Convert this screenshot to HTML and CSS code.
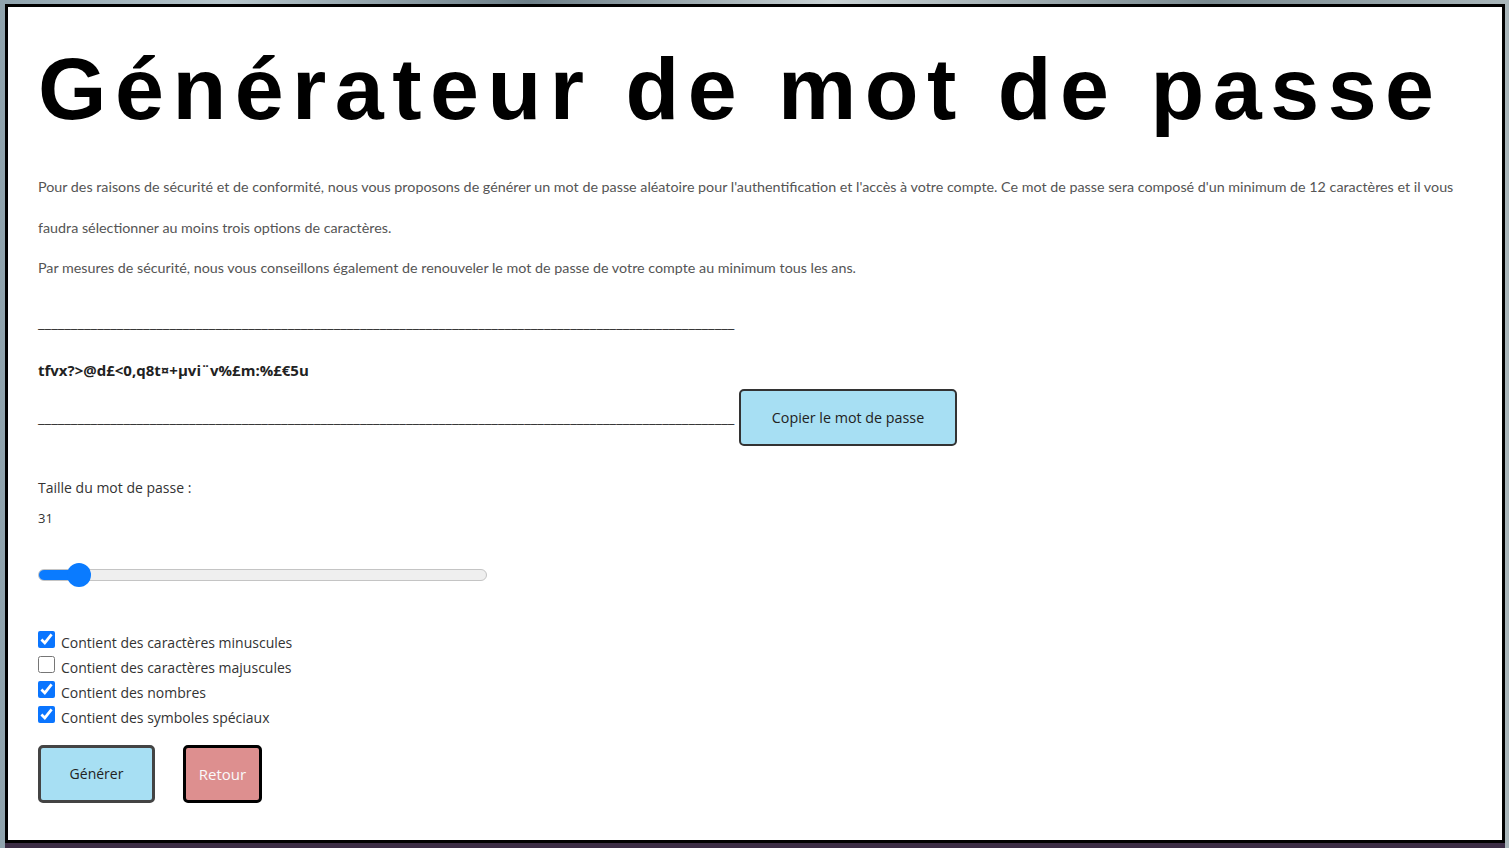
FILE: index.html
```html
<!DOCTYPE html>
<html lang="fr">
<head>
<meta charset="utf-8">
<title>Générateur de mot de passe</title>
<link rel="stylesheet" href="styles.css">
</head>
<body>
<main class="frame">
  <h1 class="title">Générateur de mot de passe</h1>
  <section class="intro">
    <p>Pour des raisons de sécurité et de conformité, nous vous proposons de générer un mot de passe aléatoire pour l'authentification et l'accès à votre compte. Ce mot de passe sera composé d'un minimum de 12 caractères et il vous faudra sélectionner au moins trois options de caractères.</p>
    <p>Par mesures de sécurité, nous vous conseillons également de renouveler le mot de passe de votre compte au minimum tous les ans.</p>
  </section>
  <section class="result">
    <div class="rule">__________________________________________________________________________________________________________</div>
    <div class="password">tfvx?&gt;@d£&lt;0,q8t¤+µvi¨v%£m:%£€5u</div>
    <div class="rule-row">
      <div class="rule">__________________________________________________________________________________________________________</div>
      <button class="btn btn-copy" type="button">Copier le mot de passe</button>
    </div>
  </section>
  <section class="settings">
    <label class="size-label" for="size">Taille du mot de passe :</label>
    <div class="size-value">31</div>
    <input class="slider" id="size" type="range" min="12" max="300" value="31">
    <div class="options">
      <label class="option"><input type="checkbox" checked> Contient des caractères minuscules</label>
      <label class="option"><input type="checkbox"> Contient des caractères majuscules</label>
      <label class="option"><input type="checkbox" checked> Contient des nombres</label>
      <label class="option"><input type="checkbox" checked> Contient des symboles spéciaux</label>
    </div>
    <div class="actions">
      <button class="btn btn-generate" type="button">Générer</button>
      <button class="btn btn-back" type="button">Retour</button>
    </div>
  </section>
</main>
</body>
</html>
```

FILE: styles.css
```css
html, body {
  margin: 0;
  height: 100%;
}
body {
  box-sizing: border-box;
  padding: 4px 4px 5px 5px;
  background: linear-gradient(90deg, #8fa3ad 0%, #b7c6cc 15%, #6d7f88 35%, #c9d2d4 55%, #7a8a90 80%, #a9b6ba 100%);
  background-color: #7f9099;
  overflow: hidden;
}
.frame {
  box-sizing: border-box;
  height: 839px;
  width: 1500px;
  background: #fff;
  border: 3px solid #000;
  padding: 27px 30px 0 30px;
  position: relative;
  box-shadow: 0 6px 0 0 #3b2c44;
}
.title {
  margin: 0;
  font-family: "Liberation Sans", Arial, sans-serif;
  font-weight: 700;
  font-size: 88px;
  line-height: 110px;
  letter-spacing: 8.5px;
  color: #000;
  white-space: nowrap;
}
.intro {
  margin-top: 23px;
  font-family: Lato, "Open Sans", sans-serif;
  font-size: 14.3px;
  line-height: 40.5px;
  color: #555;
}
.intro p {
  margin: 0;
}
.result {
  margin-top: 23px;
  font-family: "Open Sans", "Noto Sans", sans-serif;
  font-size: 15px;
  color: #333;
}
.rule {
  width: 697px;
  white-space: nowrap;
  line-height: 20px;
  color: #333;
  font-size: 15px;
}
.password {
  margin-top: 28px;
  font-weight: 700;
  font-size: 15px;
  line-height: 20px;
  color: #222;
}
.rule-row {
  display: flex;
  align-items: baseline;
  gap: 4px;
  margin-top: 9px;
}
.btn {
  font-family: "Open Sans", "Noto Sans", sans-serif;
  font-size: 14px;
  border-radius: 5px;
  cursor: pointer;
  padding: 0;
  box-sizing: border-box;
}
.btn-copy {
  width: 218px;
  height: 57px;
  background: #a7dff3;
  border: 2.5px solid #333;
  color: #222;
  font-size: 14.3px;
}
.settings {
  font-family: "Open Sans", "Noto Sans", sans-serif;
  color: #333;
  font-size: 14px;
}
.size-label {
  display: block;
  margin-top: 32px;
  line-height: 20px;
}
.size-value {
  margin-top: 10px;
  line-height: 20px;
  font-size: 13px;
}
.slider {
  display: block;
  -webkit-appearance: none;
  appearance: none;
  box-sizing: border-box;
  margin: 41px 0 0 0;
  width: 449px;
  height: 12px;
  border-radius: 6px;
  border: 1px solid #c4c4c4;
  background: linear-gradient(90deg, #0a7bff 0 9%, #efefef 9% 100%);
  outline: none;
}
.slider::-webkit-slider-thumb {
  -webkit-appearance: none;
  appearance: none;
  width: 24px;
  height: 24px;
  border-radius: 50%;
  background: #0a7bff;
  border: none;
}
.options {
  margin-top: 49px;
  display: flex;
  flex-direction: column;
}
.option {
  display: flex;
  align-items: center;
  gap: 6px;
  height: 25px;
  font-size: 14px;
  color: #333;
}
.option input {
  margin: 0;
  width: 17px;
  height: 17px;
  accent-color: #0a75ff;
  position: relative;
  top: -3px;
}
.actions {
  display: flex;
  gap: 28px;
  margin-top: 15px;
}
.btn-generate {
  width: 117px;
  height: 58px;
  background: #a7dff3;
  border: 3px solid #444;
  color: #222;
}
.btn-back {
  width: 79px;
  height: 58px;
  background: #dd8f8f;
  border: 3px solid #000;
  color: #fafafa;
  font-size: 15px;
}
```
